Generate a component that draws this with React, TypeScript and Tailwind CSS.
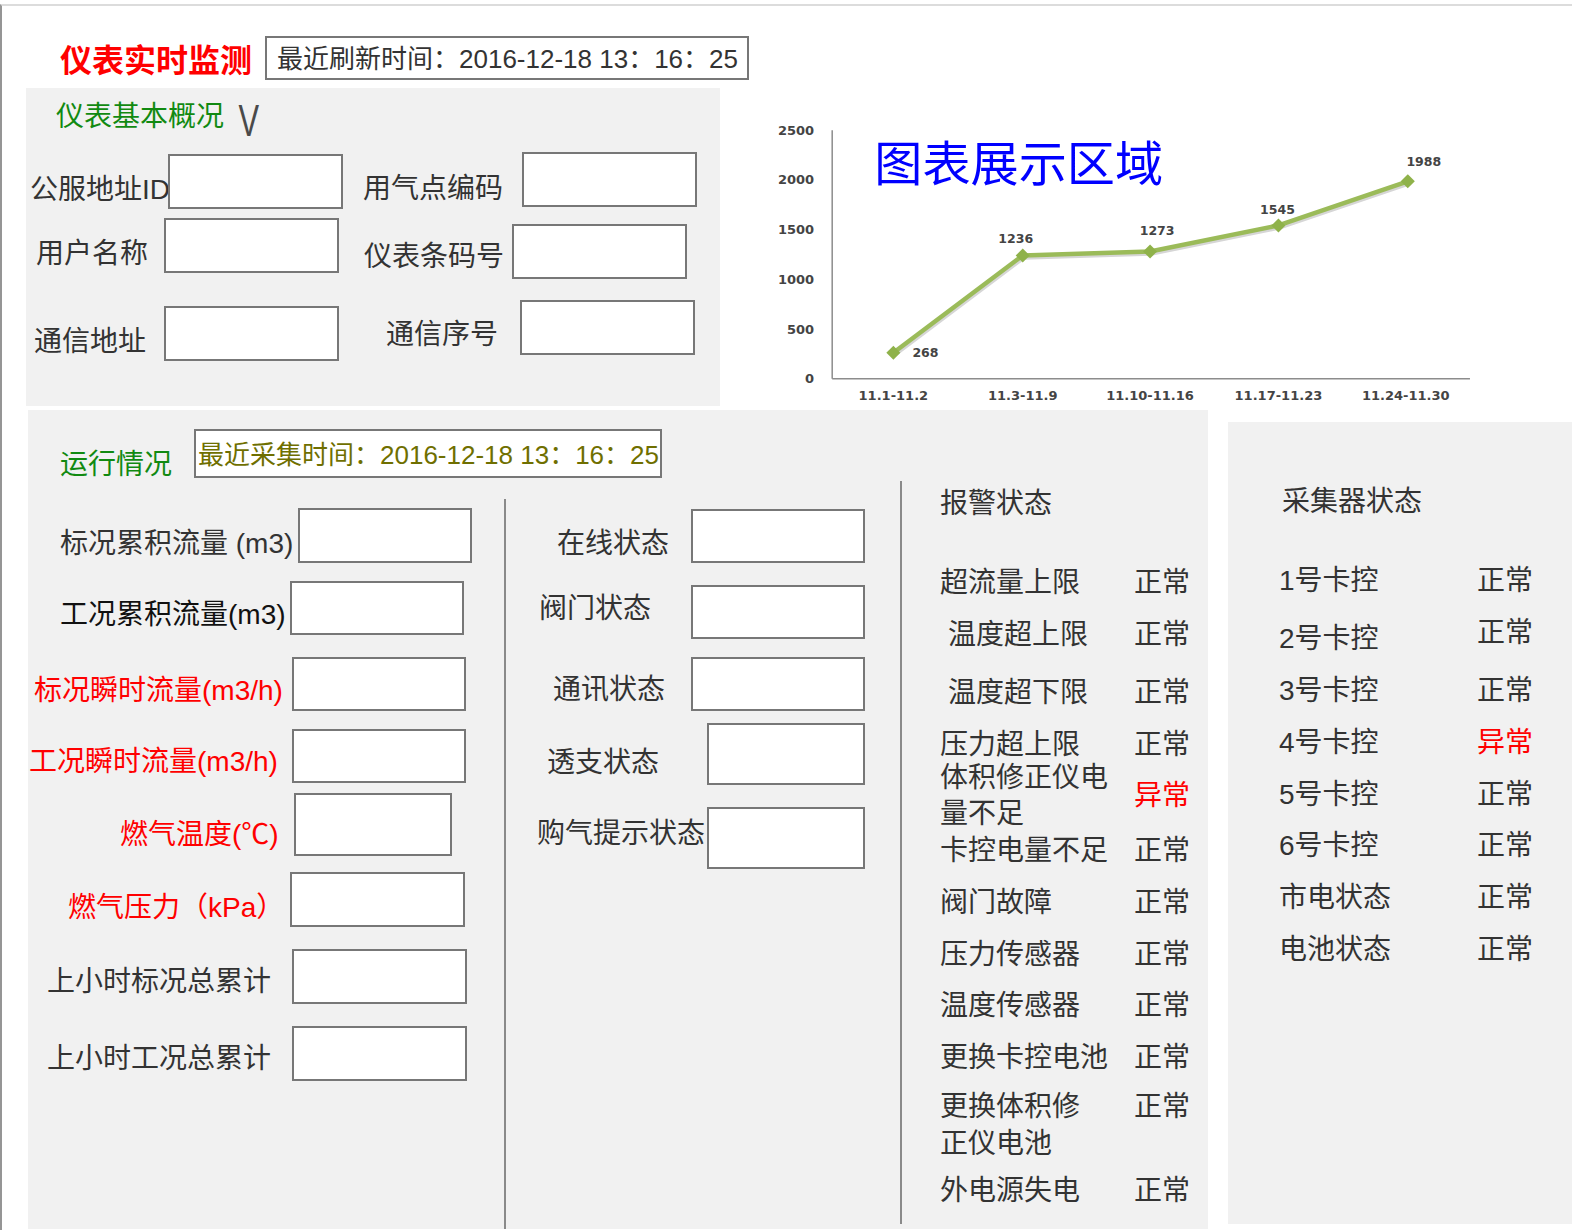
import React from "react"

type FieldDef = { text: string; row: string; lbl: string; box: string }

const BOX = "shrink-0 bg-white border-2 border-[#777777]"

const jibenLeft: FieldDef[] = [
    { text: "公服地址ID", row: "mt-[12px]", lbl: "ml-[4px] w-[138px] pt-[16px]", box: "w-[175px] h-[55px]" },
    { text: "用户名称", row: "mt-[9px]", lbl: "ml-[10px] w-[128px] pt-[16px]", box: "w-[175px] h-[55px]" },
    { text: "通信地址", row: "mt-[33px]", lbl: "ml-[8px] w-[130px] pt-[16px]", box: "w-[175px] h-[55px]" },
]

const jibenRight: FieldDef[] = [
    { text: "用气点编码", row: "mt-[10px]", lbl: "w-[159px] pt-[19px]", box: "w-[175px] h-[55px]" },
    { text: "仪表条码号", row: "mt-[17px]", lbl: "ml-[1px] w-[148px] pt-[10px]", box: "w-[175px] h-[55px]" },
    { text: "通信序号", row: "mt-[21px]", lbl: "ml-[23px] w-[134px] pt-[14px]", box: "w-[175px] h-[55px]" },
]

// 运行情况 - 流量一栏
const liuliang: FieldDef[] = [
    { text: "标况累积流量 (m3)", row: "mt-[27px]", lbl: "ml-[32px] w-[238px] pt-[16px] text-[#333]", box: "w-[174px] h-[55px]" },
    { text: "工况累积流量(m3)", row: "mt-[18px]", lbl: "ml-[32px] w-[230px] pt-[13px] text-[#111]", box: "w-[174px] h-[54px]" },
    { text: "标况瞬时流量(m3/h)", row: "mt-[22px]", lbl: "ml-[6px] w-[258px] pt-[13px] text-[#ff0000]", box: "w-[174px] h-[54px]" },
    { text: "工况瞬时流量(m3/h)", row: "mt-[18px]", lbl: "ml-[1px] w-[263px] pt-[11px] text-[#ff0000]", box: "w-[174px] h-[54px]" },
    { text: "燃气温度(℃)", row: "mt-[10px]", lbl: "ml-[92px] w-[174px] pt-[21px] text-[#ff0000]", box: "w-[158px] h-[63px]" },
    { text: "燃气压力（kPa）", row: "mt-[16px]", lbl: "ml-[40px] w-[222px] pt-[16px] text-[#ff0000]", box: "w-[175px] h-[55px]" },
    { text: "上小时标况总累计", row: "mt-[22px]", lbl: "ml-[19px] w-[245px] pt-[10px] text-[#333]", box: "w-[175px] h-[55px]" },
    { text: "上小时工况总累计", row: "mt-[22px]", lbl: "ml-[19px] w-[245px] pt-[10px] text-[#333]", box: "w-[175px] h-[55px]" },
]

// 运行情况 - 状态一栏
const zhuangtai: FieldDef[] = [
    { text: "在线状态", row: "mt-[28px]", lbl: "ml-[51px] w-[134px] pt-[15px]", box: "w-[174px] h-[54px]" },
    { text: "阀门状态", row: "mt-[22px]", lbl: "ml-[33px] w-[152px] pb-[7px]", box: "w-[174px] h-[54px]" },
    { text: "通讯状态", row: "mt-[18px]", lbl: "ml-[47px] w-[138px] pt-[11px]", box: "w-[174px] h-[54px]" },
    { text: "透支状态", row: "mt-[12px]", lbl: "ml-[41px] w-[160px] pt-[17px]", box: "w-[158px] h-[62px]" },
    { text: "购气提示状态", row: "mt-[22px]", lbl: "ml-[31px] w-[170px] pb-[9px]", box: "w-[158px] h-[62px]" },
]

const baojing = [
    { l: ["超流量上限"], v: "正常", row: "mt-[43px] items-center", lbl: "" },
    { l: ["温度超上限"], v: "正常", row: "mt-[16px] items-center", lbl: "pl-[8px]" },
    { l: ["温度超下限"], v: "正常", row: "mt-[22px] items-center", lbl: "pl-[8px]" },
    { l: ["压力超上限"], v: "正常", row: "mt-[16px] items-center", lbl: "" },
    { l: ["体积修正仪电", "量不足"], v: "异常", row: "-mt-[3px] items-center", lbl: "" },
    { l: ["卡控电量不足"], v: "正常", row: "mt-[1px] items-center", lbl: "" },
    { l: ["阀门故障"], v: "正常", row: "mt-[16px] items-center", lbl: "" },
    { l: ["压力传感器"], v: "正常", row: "mt-[16px] items-center", lbl: "" },
    { l: ["温度传感器"], v: "正常", row: "mt-[15px] items-center", lbl: "" },
    { l: ["更换卡控电池"], v: "正常", row: "mt-[16px] items-center", lbl: "" },
    { l: ["更换体积修", "正仪电池"], v: "正常", row: "mt-[12px] items-start leading-[37px]", lbl: "" },
    { l: ["外电源失电"], v: "正常", row: "mt-[11px] items-center", lbl: "" },
]

const caijiqi = [
    { l: "1号卡控", v: "正常", row: "mt-[43px] items-start", lbl: "" },
    { l: "2号卡控", v: "正常", row: "mt-[16px] items-start", lbl: "mt-[6px]" },
    { l: "3号卡控", v: "正常", row: "mt-[16px] items-start", lbl: "" },
    { l: "4号卡控", v: "异常", row: "mt-[16px] items-start", lbl: "" },
    { l: "5号卡控", v: "正常", row: "mt-[16px] items-start", lbl: "" },
    { l: "6号卡控", v: "正常", row: "mt-[15px] items-start", lbl: "" },
    { l: "市电状态", v: "正常", row: "mt-[16px] items-start", lbl: "" },
    { l: "电池状态", v: "正常", row: "mt-[16px] items-start", lbl: "" },
]

const Field = ({ f }: { f: FieldDef }) => (
    <div className={`flex items-center ${f.row}`}>
        <span className={`shrink-0 whitespace-nowrap ${f.lbl}`}>{f.text}</span>
        <div className={`${BOX} ${f.box}`} />
    </div>
)

const chartPts = [
    { x: 131, y: 237, v: "268", lx: 150, ly: 241, anchor: "start" },
    { x: 260, y: 140, v: "1236", lx: 253, ly: 128, anchor: "middle" },
    { x: 387, y: 136, v: "1273", lx: 394, ly: 120, anchor: "middle" },
    { x: 515, y: 110, v: "1545", lx: 514, ly: 99, anchor: "middle" },
    { x: 644, y: 66, v: "1988", lx: 660, ly: 51, anchor: "middle" },
]

const Chart = () => (
    <svg width="722" height="292" viewBox="0 0 720 291" className="ml-[42px] mt-[27px] shrink-0">
        {[2500, 2000, 1500, 1000, 500, 0].map((t) => (
            <text key={t} x="52" y={263 - t * 0.0992 + 4.5} textAnchor="end" fontSize="13" fontWeight="bold"
                fontFamily="DejaVu Sans, sans-serif" fill="#444">{t}</text>
        ))}
        <line x1="70" y1="15" x2="70" y2="263" stroke="#8c8c8c" strokeWidth="1.5" />
        <line x1="70" y1="263" x2="706" y2="263" stroke="#8c8c8c" strokeWidth="1.5" />
        {["11.1-11.2", "11.3-11.9", "11.10-11.16", "11.17-11.23", "11.24-11.30"].map((s, i) => (
            <text key={s} x={[131, 260, 387, 515, 642][i]} y="284" textAnchor="middle" fontSize="13" fontWeight="bold"
                fontFamily="DejaVu Sans, sans-serif" fill="#444">{s}</text>
        ))}
        <polyline points="132,239 261,142 388,138 516,112 645,68" fill="none" stroke="#d6d6d6" strokeWidth="4.5" strokeLinejoin="round" />
        <polyline points={chartPts.map((p) => `${p.x},${p.y}`).join(" ")} fill="none" stroke="#9bbb59" strokeWidth="4.5" strokeLinejoin="round" />
        {chartPts.map((p) => (
            <path key={p.v} d={`M${p.x} ${p.y - 7} L${p.x + 7} ${p.y} L${p.x} ${p.y + 7} L${p.x - 7} ${p.y} Z`} fill="#8fb24a" />
        ))}
        {chartPts.map((p) => (
            <text key={"l" + p.v} x={p.lx} y={p.ly} textAnchor={p.anchor as "start" | "middle"} fontSize="12.5" fontWeight="bold"
                fontFamily="DejaVu Sans, sans-serif" fill="#444">{p.v}</text>
        ))}
        <text x="112" y="66" fontSize="48" fill="#0000ff" fontFamily="Noto Sans CJK SC, sans-serif">图表展示区域</text>
    </svg>
)

export default function App() {
    return (
        <div className="w-[1572px] h-[1230px] bg-white pt-[4px] overflow-hidden font-['Liberation_Sans','Noto_Sans_CJK_SC',sans-serif] text-[#333]">
            <div className="h-full border-t-2 border-l-2 border-t-[#dcdcdc] border-l-[#959595]">

                {/* 标题 */}
                <div className="flex items-center mt-[30px] h-[44px]">
                    <span className="ml-[58px] w-[205px] shrink-0 whitespace-nowrap text-[32px] font-bold text-[#ff0000] leading-[40px] pt-[6px]">
                        仪表实时监测
                    </span>
                    <div className="w-[484px] h-[44px] border-2 border-[#777777] bg-white flex items-center pl-[10px] pt-[2px] text-[26px] text-[#333] whitespace-nowrap">
                        最近刷新时间：2016-12-18 13：16：25
                    </div>
                </div>

                {/* 基本概况 + 图表 */}
                <div className="flex items-start mt-[8px]">
                    <div className="ml-[24px] w-[694px] h-[318px] bg-[#f1f1f1] shrink-0 text-[28px] leading-[36px]">
                        <div className="h-[54px] flex items-center pl-[30px]">
                            <span className="text-[#118a11] pt-[4px]">仪表基本概况</span>
                            <span className="ml-[10px] mt-[12px] inline-block scale-x-[0.7] text-[44px] leading-[44px] text-[#4a4a4a] font-['Liberation_Sans',sans-serif]">V</span>
                        </div>
                        <div className="flex items-start">
                            <div className="w-[337px] shrink-0 flex flex-col">
                                {jibenLeft.map((f) => <Field key={f.text} f={f} />)}
                            </div>
                            <div className="flex flex-col">
                                {jibenRight.map((f) => <Field key={f.text} f={f} />)}
                            </div>
                        </div>
                    </div>
                    <Chart />
                </div>

                {/* 运行情况 + 采集器状态 */}
                <div className="flex items-start">
                    <div className="ml-[26px] mt-[3px] w-[1180px] h-[819px] bg-[#f1f1f1] shrink-0 flex flex-col text-[28px] leading-[36px]">
                        <div className="flex items-start mt-[19px] h-[49px]">
                            <span className="ml-[32px] mt-[18px] text-[#118a11] whitespace-nowrap">运行情况</span>
                            <div className="ml-[22px] w-[468px] h-[49px] border-2 border-[#777777] bg-white flex items-center pl-[2px] pt-[2px] text-[26px] text-[#6f6f00] whitespace-nowrap">
                                最近采集时间：2016-12-18 13：16：25
                            </div>
                        </div>

                        <div className="flex flex-1 mt-[3px]">
                            <div className="w-[476px] shrink-0 flex flex-col">
                                {liuliang.map((f) => <Field key={f.text} f={f} />)}
                            </div>
                            <div className="w-[2px] bg-[#8a8a8a] mt-[18px] shrink-0" />
                            <div className="w-[394px] shrink-0 flex flex-col">
                                {zhuangtai.map((f) => <Field key={f.text} f={f} />)}
                            </div>
                            <div className="w-[2px] bg-[#8a8a8a] mb-[5px] shrink-0" />
                            <div className="flex flex-col pl-[38px]">
                                <div className="mt-[5px]">报警状态</div>
                                {baojing.map((r) => (
                                    <div key={r.l.join("")} className={`flex ${r.row}`}>
                                        <div className={`w-[194px] shrink-0 ${r.lbl}`}>
                                            {r.l.map((s) => <div key={s} className="whitespace-nowrap">{s}</div>)}
                                        </div>
                                        <span className={r.v === "异常" ? "text-[#ff0000]" : ""}>{r.v}</span>
                                    </div>
                                ))}
                            </div>
                        </div>
                    </div>

                    <div className="ml-[20px] mt-[15px] w-[344px] h-[802px] bg-[#f1f1f1] shrink-0 flex flex-col text-[28px] leading-[36px]">
                        <div className="ml-[54px] mt-[62px]">采集器状态</div>
                        {caijiqi.map((r) => (
                            <div key={r.l} className={`flex ${r.row}`}>
                                <span className={`ml-[51px] w-[198px] shrink-0 ${r.lbl}`}>{r.l}</span>
                                <span className={r.v === "异常" ? "text-[#ff0000]" : ""}>{r.v}</span>
                            </div>
                        ))}
                    </div>
                </div>

            </div>
        </div>
    )
}
